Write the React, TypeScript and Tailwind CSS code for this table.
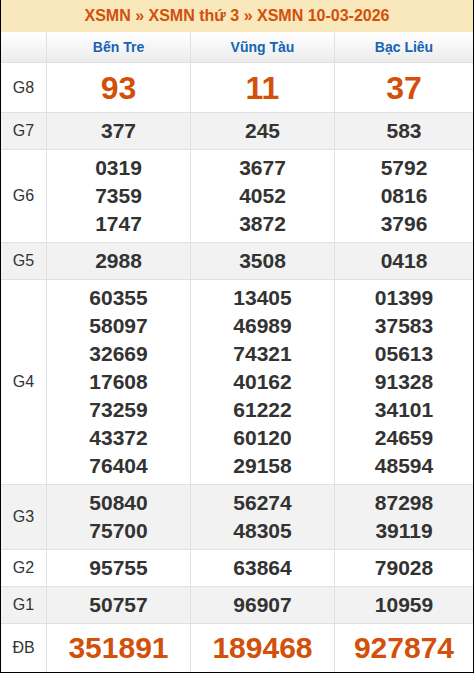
import React from 'react';

type Row = { label: string; values: string[][]; big?: boolean; gray?: boolean };

const rows: Row[] = [
  { label: 'G8', values: [['93'], ['11'], ['37']], big: true },
  { label: 'G7', values: [['377'], ['245'], ['583']], gray: true },
  { label: 'G6', values: [['0319', '7359', '1747'], ['3677', '4052', '3872'], ['5792', '0816', '3796']] },
  { label: 'G5', values: [['2988'], ['3508'], ['0418']], gray: true },
  {
    label: 'G4',
    values: [
      ['60355', '58097', '32669', '17608', '73259', '43372', '76404'],
      ['13405', '46989', '74321', '40162', '61222', '60120', '29158'],
      ['01399', '37583', '05613', '91328', '34101', '24659', '48594'],
    ],
  },
  { label: 'G3', values: [['50840', '75700'], ['56274', '48305'], ['87298', '39119']], gray: true },
  { label: 'G2', values: [['95755'], ['63864'], ['79028']] },
  { label: 'G1', values: [['50757'], ['96907'], ['10959']], gray: true },
  { label: 'ĐB', values: [['351891'], ['189468'], ['927874']], big: true },
];

const provinces = ['Bến Tre', 'Vũng Tàu', 'Bạc Liêu'];

export default function App() {
  return (
    <div className="w-[474px] h-[674px] bg-white font-['Liberation_Sans',Arial,sans-serif] text-[#333]">
      <div className="border-x border-b border-black">
        <div className="h-8 bg-[#f8e8bb] flex items-center justify-center text-[16px] font-bold text-[#d2500a]">
          XSMN » XSMN thứ 3 » XSMN 10-03-2026
        </div>

        <div className="grid grid-cols-[46px_144px_144px_1fr] h-[31px] bg-gradient-to-b from-white to-[#ececec] border-b border-[#e0e0e0]">
          <div className="border-r border-[#e0e0e0]" />
          {provinces.map((p, i) => (
            <div
              key={p}
              className={`flex items-center justify-center text-[14px] font-bold text-[#1463b5] ${i < 2 ? 'border-r border-[#e0e0e0]' : ''}`}
            >
              {p}
            </div>
          ))}
        </div>

        {rows.map((row) => (
          <div
            key={row.label}
            className={`grid grid-cols-[46px_144px_144px_1fr] border-b border-[#e0e0e0] last:border-b-0 ${row.gray ? 'bg-[#f2f2f2]' : 'bg-white'}`}
          >
            <div className="flex items-center justify-center border-r border-[#e0e0e0] text-[16px]">{row.label}</div>
            {row.values.map((vals, i) => (
              <div
                key={i}
                className={`flex flex-col items-center justify-center ${i < 2 ? 'border-r border-[#e0e0e0]' : ''} ${
                  row.big ? (row.label === 'G8' ? 'h-[49px]' : 'h-[48px]') : 'py-1'
                }`}
              >
                {vals.map((v) => (
                  <div
                    key={v}
                    className={
                      row.big
                        ? row.label === 'G8'
                          ? 'text-[32px] font-bold text-[#d2500a] leading-none'
                          : 'text-[30px] font-bold text-[#d2500a] leading-none'
                        : 'text-[21px] font-bold leading-[28px]'
                    }
                  >
                    {v}
                  </div>
                ))}
              </div>
            ))}
          </div>
        ))}
      </div>
    </div>
  );
}
